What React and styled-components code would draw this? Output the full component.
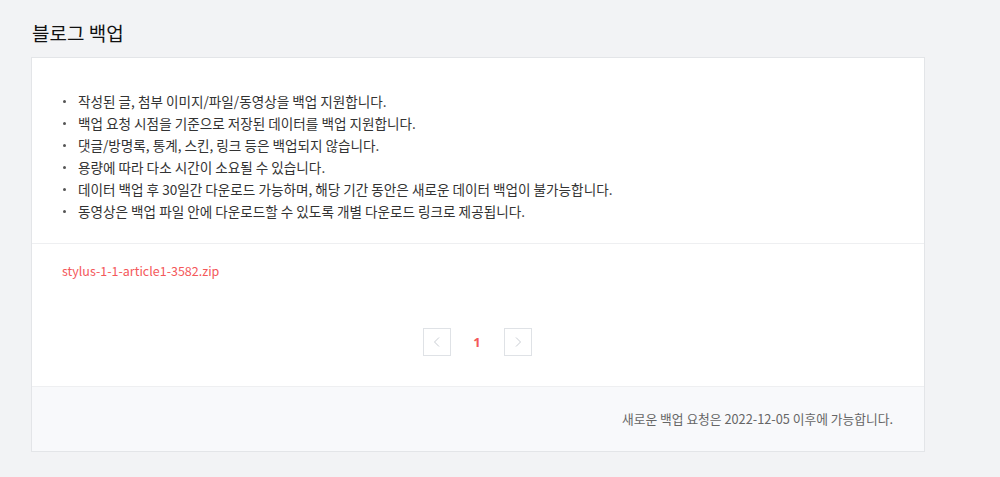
import React from 'react';
import styled, { createGlobalStyle } from 'styled-components';

const GlobalStyle = createGlobalStyle`
  html, body {
    margin: 0;
    padding: 0;
    background: #f2f3f5;
  }
  body {
    font-family: "Noto Sans CJK KR", "Noto Sans", sans-serif;
    color: #333;
  }
`;

const Page = styled.div`
  width: 1000px;
  height: 477px;
  padding: 18px 75px 0 31px;
  box-sizing: border-box;
`;

const Title = styled.h2`
  margin: 0 0 9px 1px;
  font-size: 19px;
  font-weight: 400;
  line-height: 30px;
  color: #111;
`;

const Card = styled.div`
  background: #fff;
  border: 1px solid #e3e5e8;
`;

const Section = styled.div`
  padding: ${({ pad }) => pad};
  border-top: ${({ divider }) => (divider ? '1px solid #eeeff1' : 'none')};
  background: ${({ muted }) => (muted ? '#f8f9fb' : '#fff')};
  text-align: ${({ align }) => align || 'left'};
  line-height: 20px;
`;

const Notes = styled.ul`
  margin: 0;
  padding: 0;
  list-style: none;
`;

const Note = styled.li`
  position: relative;
  padding-left: 46px;
  font-size: 13.6px;
  line-height: 22px;
  color: #333;

  &::before {
    content: '';
    position: absolute;
    left: 31px;
    top: 10px;
    width: 3px;
    height: 3px;
    border-radius: 50%;
    background: #555;
  }
`;

const FileLink = styled.a`
  display: block;
  font-size: 12.5px;
  line-height: 20px;
  color: #f4585a;
  text-decoration: none;
`;

const Pager = styled.div`
  display: flex;
  justify-content: center;
  align-items: center;
  margin: 47px 2px 0 0;
`;

const PageArrow = styled.button`
  width: 28px;
  height: 28px;
  padding: 0;
  border: 1px solid #dfe2e6;
  background: #fff;
  display: flex;
  align-items: center;
  justify-content: center;
  box-sizing: border-box;
`;

const PageNum = styled.span`
  width: 53px;
  text-align: center;
  font-size: 13px;
  font-weight: 700;
  color: #f4585a;
  font-family: "Noto Sans", sans-serif;
`;

const FooterText = styled.div`
  font-size: 12.75px;
  color: #666;
  line-height: 20px;
`;

const Chevron = ({ dir }) => (
  <svg width="10" height="12" viewBox="0 0 10 12" fill="none">
    <path
      d={dir === 'left' ? 'M7 1.5 L2.5 6 L7 10.5' : 'M3 1.5 L7.5 6 L3 10.5'}
      stroke="#c9cdd3"
      strokeWidth="1"
    />
  </svg>
);

const notes = [
  '작성된 글, 첨부 이미지/파일/동영상을 백업 지원합니다.',
  '백업 요청 시점을 기준으로 저장된 데이터를 백업 지원합니다.',
  '댓글/방명록, 통계, 스킨, 링크 등은 백업되지 않습니다.',
  '용량에 따라 다소 시간이 소요될 수 있습니다.',
  '데이터 백업 후 30일간 다운로드 가능하며, 해당 기간 동안은 새로운 데이터 백업이 불가능합니다.',
  '동영상은 백업 파일 안에 다운로드할 수 있도록 개별 다운로드 링크로 제공됩니다.',
];

export default function App() {
  return (
    <>
      <GlobalStyle />
      <Page>
        <Title>블로그 백업</Title>
        <Card>
          <Section pad="32px 0 21px">
            <Notes>
              {notes.map((n) => (
                <Note key={n}>{n}</Note>
              ))}
            </Notes>
          </Section>
          <Section divider pad="17px 30px 30px">
            <FileLink href="#">stylus-1-1-article1-3582.zip</FileLink>
            <Pager>
              <PageArrow aria-label="이전">
                <Chevron dir="left" />
              </PageArrow>
              <PageNum>1</PageNum>
              <PageArrow aria-label="다음">
                <Chevron dir="right" />
              </PageArrow>
            </Pager>
          </Section>
          <Section divider muted align="right" pad="22px 31px 22px">
            <FooterText>새로운 백업 요청은 2022-12-05 이후에 가능합니다.</FooterText>
          </Section>
        </Card>
      </Page>
    </>
  );
}
